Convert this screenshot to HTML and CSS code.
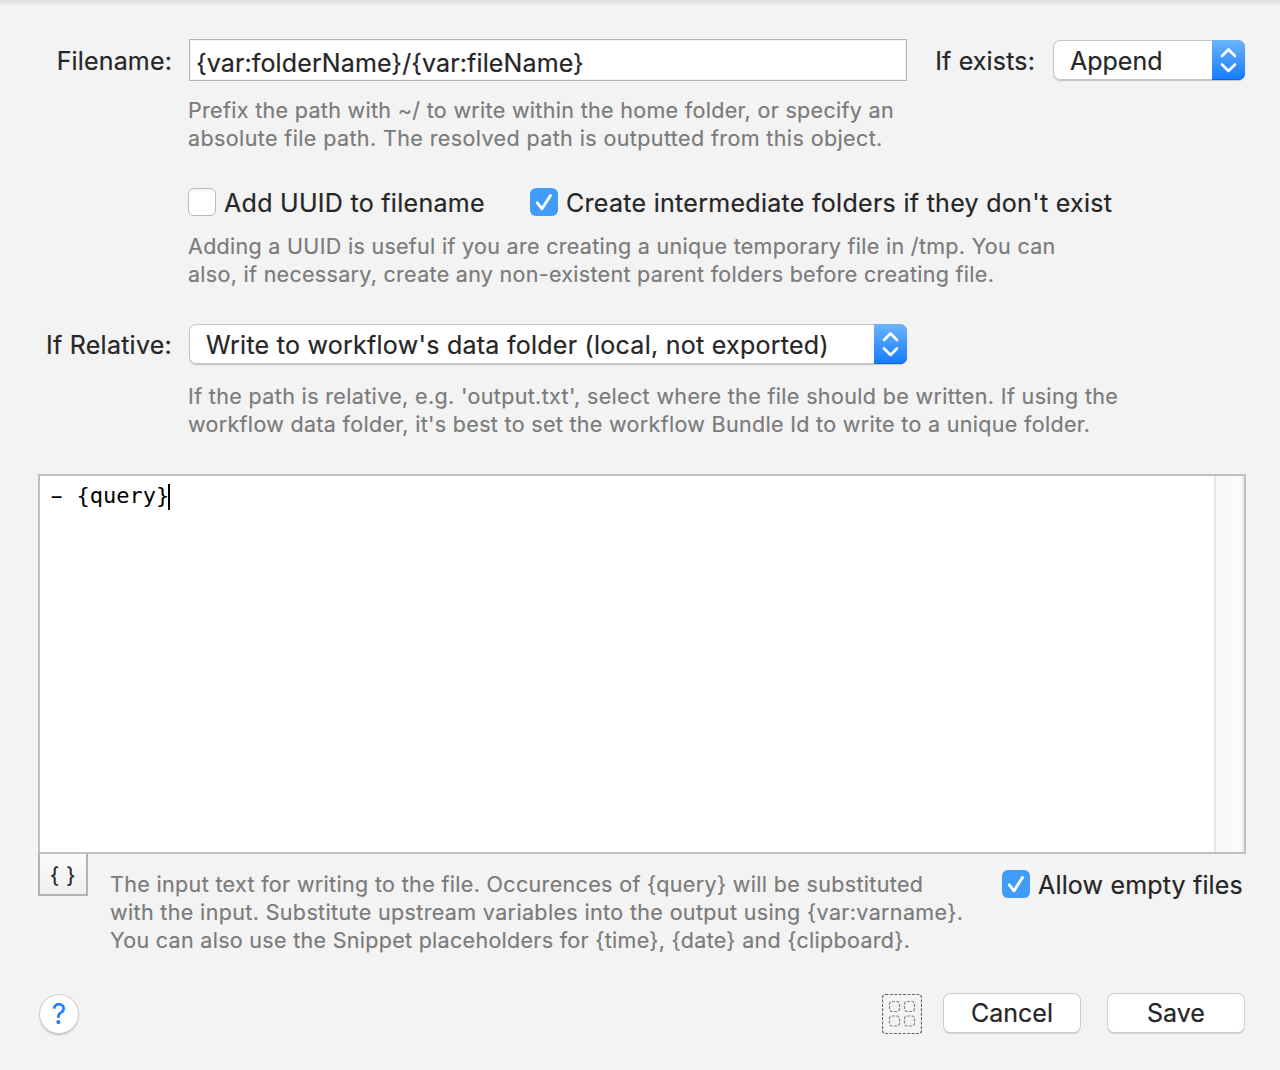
FILE: index.html
```html
<!DOCTYPE html>
<html lang="en">
<head>
<meta charset="utf-8">
<title>Write Text File</title>
<link rel="stylesheet" href="styles.css">
</head>
<body>
<main class="sheet">
  <section class="row filename-row">
    <label class="label">Filename:</label>
    <div class="field">{var:folderName}/{var:fileName}</div>
    <label class="label exists-label">If exists:</label>
    <div class="select exists-select">
      <span class="value">Append</span>
      <span class="stepper"><svg width="33" height="40" viewBox="0 0 33 40"><path d="M10 16l6.500-6.500L23 16M10 24.500l6.500 6.500L23 24.500"/></svg></span>
    </div>
  </section>
  <p class="hint filename-hint"><span class="snug">Prefix the path with ~/ to write within the home folder, or specify an</span><br><span class="loose">absolute file path. The resolved path is outputted from this object.</span></p>

  <section class="row checks-row">
    <label class="check uuid-check"><span class="box"></span>Add UUID to filename</label>
    <label class="check"><span class="box checked"><svg width="28" height="28" viewBox="0 0 28 28"><path d="M7.300 14.800l4.700 6L20.500 7.500"/></svg></span>Create intermediate folders if they don't exist</label>
  </section>
  <p class="hint checks-hint"><span class="tight">Adding a UUID is useful if you are creating a unique temporary file in /tmp. You can</span><br><span class="tight">also, if necessary, create any non-existent parent folders before creating file.</span></p>

  <section class="row relative-row">
    <label class="label relative-label">If Relative:</label>
    <div class="select relative-select">
      <span class="value">Write to workflow's data folder (local, not exported)</span>
      <span class="stepper"><svg width="33" height="40" viewBox="0 0 33 40"><path d="M10 16l6.500-6.500L23 16M10 24.500l6.500 6.500L23 24.500"/></svg></span>
    </div>
  </section>
  <p class="hint relative-hint"><span class="wide">If the path is relative, e.g. 'output.txt', select where the file should be written. If using the</span><br><span class="snug">workflow data folder, it's best to set the workflow Bundle Id to write to a unique folder.</span></p>

  <section class="editor">
    <div class="text"><span class="dash">-</span> {query}<span class="caret"></span></div>
    <div class="scrollbar"></div>
  </section>
  <section class="under">
    <button class="braces">{ }</button>
    <p class="hint editor-hint">The input text for writing to the file. Occurences of {query} will be substituted<br><span class="wide">with the input. Substitute upstream variables into the output using {var:varname}.</span><br><span class="tight">You can also use the Snippet placeholders for {time}, {date} and {clipboard}.</span></p>
    <label class="check empty-check"><span class="box checked"><svg width="28" height="28" viewBox="0 0 28 28"><path d="M7.300 14.800l4.700 6L20.500 7.500"/></svg></span>Allow empty files</label>
  </section>
  <footer class="footer">
    <button class="help">?</button>
    <svg class="grid-icon" width="40" height="40" viewBox="0 0 40 40"><rect class="outer" x=".5" y=".5" width="39" height="39" rx="3"/><rect x="7.500" y="7.500" width="10" height="10" rx="2.500"/><rect x="22.500" y="7.500" width="10" height="10" rx="2.500"/><rect x="7.500" y="22" width="10" height="10" rx="2.500"/><rect x="22.500" y="22" width="10" height="10" rx="2.500"/></svg>
    <button class="push">Cancel</button>
    <button class="push">Save</button>
  </footer>
</main>
</body>
</html>
```
FILE: styles.css
```css
* { box-sizing: border-box; }
body {
  margin: 0;
  background: #f3f3f3;
  color: #262626;
  font: 25px/30px Inter, "Liberation Sans", sans-serif;
  -webkit-text-stroke: .2px;
}
.sheet {
  width: 1280px;
  height: 1070px;
  padding: 39px 35px 0 38px;
  background: linear-gradient(#dfdfdf 0, #e3e3e3 3px, #ececec 4px, #f3f3f3 6px) no-repeat 0 0 / 100% 6px;
}
p { margin: 0; }
.row { display: flex; align-items: center; }
.label { width: 134px; padding-top: 2px; text-align: right; letter-spacing: .16px; white-space: nowrap; }
.filename-row { height: 42px; }
.field {
  width: 718px;
  height: 42px;
  margin-left: 17px;
  padding: 8px 6px 0;
  border: 1px solid #b3b3b3;
  background: #fff;
  box-shadow: inset 0 0 0 1px #f3f3f3;
  letter-spacing: .12px;
}
.exists-label { width: 128px; }
.relative-label { letter-spacing: .25px; }
.select {
  display: flex;
  height: 40px;
  border-radius: 7px;
  background: #fff;
  box-shadow: inset 0 0 0 1px #c6c6c6, 0 1px 1px rgba(0, 0, 0, .2);
}
.value { flex: 1; padding: 6px 0 0 17px; white-space: nowrap; }
.exists-select { width: 192px; margin-left: 18px; }
.relative-select { width: 718px; margin-left: 17px; letter-spacing: .26px; }
.stepper {
  width: 33px;
  height: 40px;
  border-radius: 0 7px 7px 0;
  background: linear-gradient(#6cb3fa, #147bfd);
  box-shadow: inset 0 -1px #0a62e8;
}
svg { display: block; fill: none; }
.stepper path, .box path { stroke: #fff; stroke-width: 2.6; stroke-linecap: round; stroke-linejoin: round; }
.box path { stroke-width: 2.9; }
.hint {
  margin-left: 150px;
  color: #7b7b7b;
  font-size: 21.5px;
  line-height: 28px;
  letter-spacing: .335px;
  white-space: nowrap;
}
.tight { letter-spacing: .295px; }
.snug { letter-spacing: .315px; }
.wide { letter-spacing: .354px; }
.loose { letter-spacing: .39px; }
.filename-hint { margin-top: 15px; }
.checks-row { height: 28px; margin-top: 36px; padding-left: 150px; }
.uuid-check { width: 342px; }
.check { display: flex; align-items: center; gap: 8px; height: 28px; padding-top: 1px; letter-spacing: .29px; white-space: nowrap; }
.box {
  width: 28px;
  height: 28px;
  margin-top: -1px;
  border: 1px solid #b9b9b9;
  border-radius: 6px;
  background: linear-gradient(#f6f6f6, #fff 4px);
}
.box.checked { border: 0; background: #419bf9; }
.checks-hint { margin-top: 16px; }
.relative-row { height: 40px; margin-top: 36px; }
.relative-hint { margin-top: 18px; }
.editor {
  display: flex;
  width: 1208px;
  height: 380px;
  margin-top: 36px;
  border: 2px solid #c0c0c0;
  background: #fff;
}
.text {
  flex: 1;
  padding: 5px 10px;
  color: #000;
  font: 22px/30px "DejaVu Sans Mono", monospace;
  -webkit-text-stroke: 0;
  white-space: pre;
}
.dash { display: inline-block; transform: scaleX(1.75); }
.caret { display: inline-block; width: 2px; height: 26px; margin-left: -1px; background: #000; vertical-align: -7px; }
.scrollbar {
  width: 30px;
  border-left: 2px solid #e6e6e6;
  border-right: 2px solid #ececec;
  background: linear-gradient(90deg, #f8f8f8, #fbfbfb);
}
.under { display: flex; align-items: flex-start; height: 139px; }
button { padding: 0; border: 0; color: inherit; font: inherit; }
.braces {
  width: 50px;
  height: 42px;
  padding-top: 2px;
  border: 2px solid #b3b3b3;
  border-top: 0;
  background: linear-gradient(#fbfbfb, #efefef);
  font-size: 21.5px;
  letter-spacing: .5px;
}
.editor-hint { width: 892px; margin: 16px 0 0 22px; }
.empty-check { margin-top: 16px; letter-spacing: .17px; }
.footer { display: flex; align-items: flex-start; height: 42px; }
.help {
  width: 38px;
  height: 38px;
  margin: 2px 804px 0 2px;
  border-radius: 50%;
  background: #fff;
  box-shadow: 0 0 0 1px #cfcfcf, 0 2px 2px rgba(0, 0, 0, .25);
  color: #1a80fb;
  font-size: 28px;
}
.grid-icon { margin: 1px 22px 0 0; flex: none; }
.grid-icon rect { stroke: #858585; stroke-width: 1.2; stroke-dasharray: 3 1.4; }
.grid-icon .outer { stroke: #666; }
.push {
  width: 136px;
  height: 38px;
  margin-top: 1px;
  border-radius: 6px;
  background: #fff;
  box-shadow: 0 0 0 1px #cbcbcb, 0 2px 1px rgba(0, 0, 0, .15);
}
.push + .push { margin-left: 28px; }
```
